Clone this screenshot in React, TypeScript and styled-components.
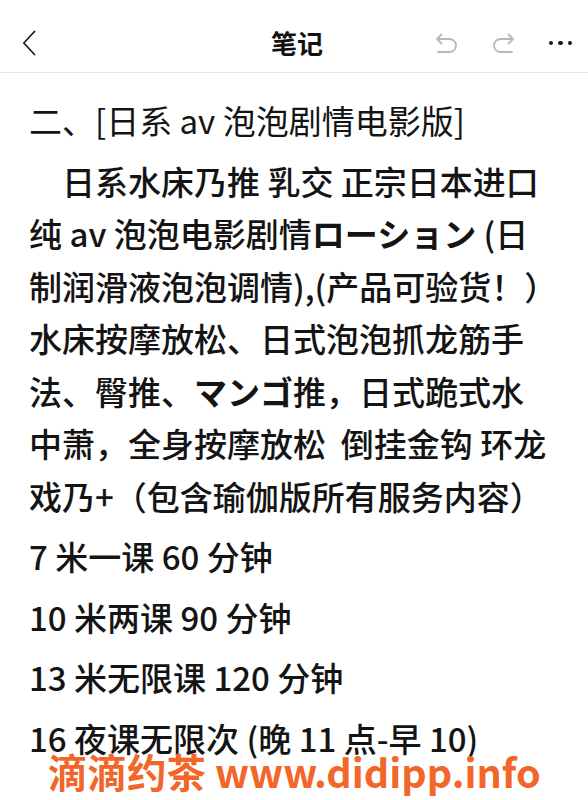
import styled, { createGlobalStyle } from "styled-components";

const GlobalStyle = createGlobalStyle`
    html, body {
        margin: 0;
        padding: 0;
        background: #ffffff;
    }
    body {
        font-family: "Noto Sans CJK SC", "Noto Sans", sans-serif;
        color: #111111;
    }
`;

const paragraphLines = [
    "　日系水床乃推 乳交 正宗日本进口",
    ["纯 av 泡泡电影剧情", "ローション", " (日"],
    "制润滑液泡泡调情),(产品可验货！）",
    "水床按摩放松、日式泡泡抓龙筋手",
    ["法、臀推、", "マンゴ", "推，日式跪式水"],
    "中萧，全身按摩放松  倒挂金钩 环龙",
    "戏乃+（包含瑜伽版所有服务内容）",
];

const prices = [
    "7 米一课 60 分钟",
    "10 米两课 90 分钟",
    "13 米无限课 120 分钟",
    "16 夜课无限次 (晚 11 点-早 10)",
];

const BackIcon = () => (
    <svg width="14" height="26" viewBox="0 0 14 26" fill="none">
        <polyline points="12.5,1.5 1.8,13 12.5,24.5" stroke="#1f1f1f" strokeWidth="1.8" strokeLinecap="round" strokeLinejoin="round" />
    </svg>
);

const UturnIcon = ({ flip }: { flip?: boolean }) => (
    <svg width="26" height="22" viewBox="0 0 26 22" fill="none" style={flip ? { transform: "scaleX(-1)" } : undefined}>
        <path
            d="M7.5 2.5 L3 7 L7.5 11.5 M3 7 H15.5 A6.5 6.5 0 0 1 15.5 20 H4"
            stroke="#b8b8b8"
            strokeWidth="1.8"
            strokeLinecap="round"
            strokeLinejoin="round"
        />
    </svg>
);

const App = () => {
    return (
        <Page>
            <GlobalStyle />
            <Header>
                <HeaderSide>
                    <IconButton>
                        <BackIcon />
                    </IconButton>
                </HeaderSide>
                <Title>笔记</Title>
                <HeaderSide $align="end">
                    <Actions>
                        <IconButton>
                            <UturnIcon />
                        </IconButton>
                        <IconButton>
                            <UturnIcon flip />
                        </IconButton>
                        <More>
                            <Dot />
                            <Dot />
                            <Dot />
                        </More>
                    </Actions>
                </HeaderSide>
            </Header>

            <Note>
                <Paragraph>
                    <Line>二、[日系 av 泡泡剧情电影版]</Line>
                </Paragraph>

                <Paragraph $weight={500}>
                    {paragraphLines.map((line, i) => (
                        <Line key={i}>
                            {typeof line === "string" ? (
                                line
                            ) : (
                                <>
                                    {line[0]}
                                    <Kana>{line[1]}</Kana>
                                    {line[2]}
                                </>
                            )}
                        </Line>
                    ))}
                </Paragraph>

                {prices.map((p) => (
                    <Paragraph key={p} $weight={500}>
                        <Line>{p}</Line>
                    </Paragraph>
                ))}
            </Note>

            <Watermark>滴滴约茶 www.didipp.info</Watermark>
        </Page>
    );
};

export default App;

const Page = styled.div`
    position: relative;
    width: 588px;
    height: 800px;
    overflow: hidden;
    background: #ffffff;
`;

const Header = styled.header`
    display: grid;
    grid-template-columns: 1fr auto 1fr;
    align-items: center;
    box-sizing: border-box;
    height: 73px;
    padding: 14px 16px 0 22px;
    border-bottom: 1px solid #e6e6e6;
    align-content: start;
`;

const HeaderSide = styled.div<{ $align?: "start" | "end" }>`
    display: flex;
    align-items: center;
    justify-content: ${(p) => (p.$align === "end" ? "flex-end" : "flex-start")};
    height: 58px;
`;

const Title = styled.h1`
    margin: 0;
    font-size: 26px;
    font-weight: 700;
    color: #111111;
    line-height: 58px;
`;

const Actions = styled.div`
    display: flex;
    align-items: center;
    gap: 30px;
`;

const IconButton = styled.div`
    display: flex;
    align-items: center;
    justify-content: center;
`;

const More = styled.div`
    display: flex;
    align-items: center;
    gap: 5px;
    margin-left: 3px;
`;

const Dot = styled.span`
    width: 4.5px;
    height: 4.5px;
    border-radius: 50%;
    background: #1a1a1a;
`;

const Note = styled.main`
    padding: 21px 20px 0 29px;
`;

const Paragraph = styled.p<{ $weight?: number }>`
    margin: 0 0 8px;
    font-size: 33px;
    line-height: 52.5px;
    font-weight: ${(p) => p.$weight ?? 400};
    color: #141414;
`;

const Line = styled.span`
    display: block;
    white-space: pre;
`;

const Kana = styled.span`
    font-weight: 700;
`;

const Watermark = styled.div`
    position: absolute;
    left: 48px;
    top: 747px;
    font-size: 39.5px;
    line-height: 48px;
    font-weight: 700;
    color: #f2662a;
    white-space: nowrap;
`;
